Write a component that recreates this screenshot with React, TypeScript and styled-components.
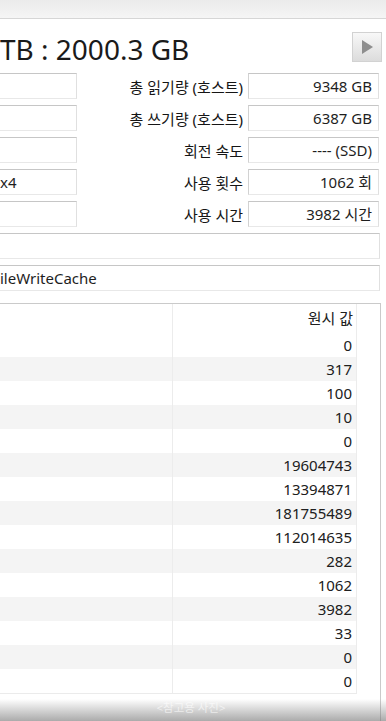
import React from 'react'
import styled, { createGlobalStyle } from 'styled-components'

const GlobalStyle = createGlobalStyle`
  html, body {
    margin: 0;
    padding: 0;
    background: #ffffff;
  }
  body {
    font-family: 'Noto Sans', 'Noto Sans CJK KR', sans-serif;
    color: #1e1e1e;
  }
`

const Window = styled.div`
  position: relative;
  width: 386px;
  height: 721px;
  overflow: hidden;
  background: #ffffff;
  display: flex;
  flex-direction: column;
`

const TopStrip = styled.div`
  height: 18px;
  flex: none;
  background: linear-gradient(#ebebeb, #f5f5f5);
  border-bottom: 1px solid #d6d6d6;
`

const TitleRow = styled.div`
  height: 54px;
  flex: none;
  display: flex;
  justify-content: space-between;
  align-items: flex-start;
`

const Title = styled.div`
  margin: 16px 0 0 0;
  font-size: 28px;
  line-height: 28px;
  white-space: nowrap;
  color: #1a1a1a;
`

const PlayButton = styled.button`
  margin: 13px 4px 0 0;
  width: 30px;
  height: 30px;
  padding: 0;
  border: 1px solid #d2d2d2;
  background: linear-gradient(#f8f8f8, #dcdcdc);
  display: flex;
  align-items: center;
  justify-content: center;
`

const InfoGrid = styled.div`
  display: grid;
  grid-template-columns: 77px 1fr 131px;
  grid-auto-rows: 26px;
  row-gap: 6px;
  padding-right: 7px;
  flex: none;
`

const Box = styled.div<{ $align?: 'left' | 'right'; $cut?: boolean }>`
  box-sizing: border-box;
  display: flex;
  align-items: center;
  justify-content: ${(p) => (p.$align === 'right' ? 'flex-end' : 'flex-start')};
  padding: ${(p) => (p.$align === 'right' ? '0 6px 0 0' : '0')};
  border-top: 1px solid #c6c6c6;
  border-left: ${(p) => (p.$cut ? 'none' : '1px solid #d2d2d2')};
  border-right: 1px solid #e0e0e0;
  border-bottom: 1px solid #e8e8e8;
  background: #ffffff;
  font-size: 15px;
  line-height: 24px;
  white-space: nowrap;
  overflow: hidden;
`

const Label = styled.div`
  display: flex;
  align-items: center;
  justify-content: flex-end;
  padding-right: 5px;
  font-size: 15px;
  white-space: nowrap;
  color: #151515;
`

const FieldStack = styled.div`
  display: flex;
  flex-direction: column;
  gap: 6px;
  margin-top: 6px;
  padding-right: 6px;
  flex: none;
`

const Field = styled(Box)`
  height: 26px;
`

const Table = styled.div`
  margin: 12px 5px 0 0;
  flex: 1;
  border-top: 1px solid #cacaca;
  border-right: 1px solid #cacaca;
  display: flex;
  flex-direction: column;
`

const List = styled.div`
  width: 357px;
  border-bottom: 1px solid #ebebeb;
`

const Row = styled.div<{ $shade?: boolean; $head?: boolean }>`
  display: grid;
  grid-template-columns: 172px 185px;
  height: ${(p) => (p.$head ? '29px' : '24px')};
  background: ${(p) => (p.$shade ? '#f4f4f4' : '#ffffff')};
  font-size: 15px;
`

const NameCell = styled.div``

const ValueCell = styled.div<{ $head?: boolean }>`
  box-sizing: border-box;
  border-left: 1px solid #ececec;
  border-right: 1px solid #ececec;
  display: flex;
  align-items: center;
  justify-content: flex-end;
  padding: ${(p) => (p.$head ? '0 3px 2px 0' : '0 4px 0 0')};
  color: #202020;
`

const Overlay = styled.div`
  position: absolute;
  left: 0;
  right: 0;
  bottom: 0;
  height: 22px;
  background: linear-gradient(rgba(150, 150, 150, 0), rgba(115, 115, 115, 0.6));
  display: flex;
  justify-content: center;
`

const Caption = styled.div`
  margin-top: 2px;
  margin-left: -4px;
  font-size: 11.5px;
  line-height: 14px;
  color: rgba(255, 255, 255, 0.6);
`

const info = [
  { left: '', label: '총 읽기량 (호스트)', value: '9348 GB' },
  { left: '', label: '총 쓰기량 (호스트)', value: '6387 GB' },
  { left: '', label: '회전 속도', value: '---- (SSD)' },
  { left: 'x4', label: '사용 횟수', value: '1062 회' },
  { left: '', label: '사용 시간', value: '3982 시간' },
]

const raw = [
  '0', '317', '100', '10', '0', '19604743', '13394871', '181755489',
  '112014635', '282', '1062', '3982', '33', '0', '0',
]

export default function App() {
  return (
    <>
      <GlobalStyle />
      <Window>
        <TopStrip />
        <TitleRow>
          <Title>TB : 2000.3 GB</Title>
          <PlayButton aria-label="next">
            <svg width="12" height="14" viewBox="0 0 12 14">
              <polygon points="1,0 12,7 1,14" fill="#8e8e8e" />
            </svg>
          </PlayButton>
        </TitleRow>

        <InfoGrid>
          {info.map((r, i) => (
            <React.Fragment key={i}>
              <Box $cut>{r.left}</Box>
              <Label>{r.label}</Label>
              <Box $align="right">{r.value}</Box>
            </React.Fragment>
          ))}
        </InfoGrid>

        <FieldStack>
          <Field $cut />
          <Field $cut>ileWriteCache</Field>
        </FieldStack>

        <Table>
          <List>
            <Row $head>
              <NameCell />
              <ValueCell $head>원시 값</ValueCell>
            </Row>
            {raw.map((v, i) => (
              <Row key={i} $shade={i % 2 === 1}>
                <NameCell />
                <ValueCell>{v}</ValueCell>
              </Row>
            ))}
          </List>
        </Table>

        <Overlay>
          <Caption>&lt;참고용 사진&gt;</Caption>
        </Overlay>
      </Window>
    </>
  )
}
